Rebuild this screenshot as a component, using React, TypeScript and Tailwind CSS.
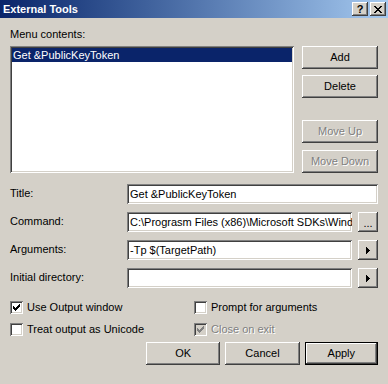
import React from "react";

const raised =
  "shadow-[inset_-1px_-1px_#404040,inset_1px_1px_#ffffff,inset_-2px_-2px_#808080,inset_2px_2px_#d4d0c8]";
const sunken =
  "shadow-[inset_1px_1px_#808080,inset_-1px_-1px_#ffffff,inset_2px_2px_#404040,inset_-2px_-2px_#d4d0c8]";

function Button({
  label,
  disabled,
  className = "",
}: {
  label: string;
  disabled?: boolean;
  className?: string;
}) {
  return (
    <div
      className={`flex h-[23px] w-[76px] items-center justify-center bg-[#d4d0c8] ${raised} ${
        disabled ? "text-[#808080] [text-shadow:1px_1px_#ffffff]" : "text-black"
      } ${className}`}
    >
      {label}
    </div>
  );
}

function Arrow() {
  return (
    <div className={`flex h-[20px] w-[20px] items-center justify-center bg-[#d4d0c8] ${raised}`}>
      <svg width="4" height="7" viewBox="0 0 4 7" shapeRendering="crispEdges">
        <path d="M0 0 L4 3.5 L0 7 Z" fill="#000" />
      </svg>
    </div>
  );
}

function Check({ color }: { color: string }) {
  // classic 7x7 tick
  const px = [
    [6, 0],
    [5, 1], [6, 1],
    [0, 2], [4, 2], [5, 2], [6, 2],
    [0, 3], [1, 3], [3, 3], [4, 3], [5, 3],
    [0, 4], [1, 4], [2, 4], [3, 4], [4, 4],
    [1, 5], [2, 5], [3, 5],
    [2, 6],
  ];
  return (
    <svg width="7" height="7" viewBox="0 0 7 7" shapeRendering="crispEdges">
      {px.map(([x, y]) => (
        <rect key={`${x}-${y}`} x={x} y={y} width="1" height="1" fill={color} />
      ))}
    </svg>
  );
}

function CheckBox({
  label,
  checked,
  disabled,
}: {
  label: string;
  checked?: boolean;
  disabled?: boolean;
}) {
  return (
    <div className="flex h-[13px] items-center gap-[4px]">
      <div
        className={`flex h-[13px] w-[13px] items-center justify-center ${sunken} ${
          disabled ? "bg-[#d4d0c8]" : "bg-white"
        }`}
      >
        {checked && <Check color={disabled ? "#808080" : "#000000"} />}
      </div>
      <span
        className={
          disabled ? "text-[#808080] [text-shadow:1px_1px_#ffffff]" : "text-black"
        }
      >
        {label}
      </span>
    </div>
  );
}

function Field({ value, width }: { value: string; width: string }) {
  return (
    <div
      className={`flex h-[20px] ${width} items-center overflow-hidden whitespace-nowrap bg-white pl-[3px] pr-[2px] ${sunken}`}
    >
      {value}
    </div>
  );
}

export default function App() {
  return (
    <div className="h-[384px] w-[388px] overflow-hidden bg-[#d4d0c8] font-['Liberation_Sans',Arial,sans-serif] text-[11px] leading-[13px] text-black">
      {/* title bar */}
      <div className="flex h-[18px] items-center bg-gradient-to-r from-[#0a246a] to-[#a6caf0] pl-[3px] pr-[2px]">
        <span className="font-bold text-white">External Tools</span>
        <div className="ml-auto flex gap-[2px]">
          <div className={`flex h-[14px] w-[16px] items-center justify-center bg-[#d4d0c8] text-[11px] font-bold leading-[11px] ${raised}`}>
            ?
          </div>
          <div className={`flex h-[14px] w-[16px] items-center justify-center bg-[#d4d0c8] ${raised}`}>
            <svg width="8" height="7" viewBox="0 0 8 7" shapeRendering="crispEdges">
              <path d="M0 0h2l2 2.5 2-2.5h2L5 3.5 8 7H6L4 4.5 2 7H0l3-3.5z" fill="#000" />
            </svg>
          </div>
        </div>
      </div>

      <div className="px-[10px] pt-[10px]">
        <div>Menu contents:</div>

        <div className="mt-[5px] flex">
          <div className={`h-[127px] w-[285px] bg-white p-[2px] ${sunken}`}>
            <div className="flex h-[14px] items-center bg-[#0a246a] pl-[1px] text-white">
              Get &amp;PublicKeyToken
            </div>
          </div>
          <div className="ml-[8px] flex flex-col">
            <Button label="Add" />
            <Button label="Delete" className="mt-[6px]" />
            <Button label="Move Up" disabled className="mt-[22px]" />
            <Button label="Move Down" disabled className="mt-[7px]" />
          </div>
        </div>

        <div className="mt-[11px] flex flex-col gap-[8px]">
          <div className="flex items-center">
            <div className="w-[117px] pb-[2px]">Title:</div>
            <Field value="Get &PublicKeyToken" width="w-[251px]" />
          </div>
          <div className="flex items-center">
            <div className="w-[117px] pb-[2px]">Command:</div>
            <Field
              value={"C:\\Prograsm Files (x86)\\Microsoft SDKs\\Windows\\v7.0A\\bin\\sn.exe"}
              width="w-[225px]"
            />
            <div
              className={`ml-[6px] flex h-[20px] w-[20px] items-center justify-center bg-[#d4d0c8] pt-[2px] ${raised}`}
            >
              ...
            </div>
          </div>
          <div className="flex items-center">
            <div className="w-[117px] pb-[2px]">Arguments:</div>
            <Field value="-Tp $(TargetPath)" width="w-[225px]" />
            <div className="ml-[6px]">
              <Arrow />
            </div>
          </div>
          <div className="flex items-center">
            <div className="w-[117px] pb-[2px]">Initial directory:</div>
            <Field value="" width="w-[225px]" />
            <div className="ml-[6px]">
              <Arrow />
            </div>
          </div>
        </div>

        <div className="mt-[13px] grid grid-cols-[184px_1fr] gap-y-[9px]">
          <CheckBox label="Use Output window" checked />
          <CheckBox label="Prompt for arguments" />
          <CheckBox label="Treat output as Unicode" />
          <CheckBox label="Close on exit" checked disabled />
        </div>

        <div className="ml-[136px] mt-[6px] flex gap-[5px]">
          <Button label="OK" />
          <Button label="Cancel" />
          <div className="h-[23px] w-[75px] border border-black">
            <div
              className={`flex h-full w-full items-center justify-center bg-[#d4d0c8] ${raised}`}
            >
              Apply
            </div>
          </div>
        </div>
      </div>
    </div>
  );
}
